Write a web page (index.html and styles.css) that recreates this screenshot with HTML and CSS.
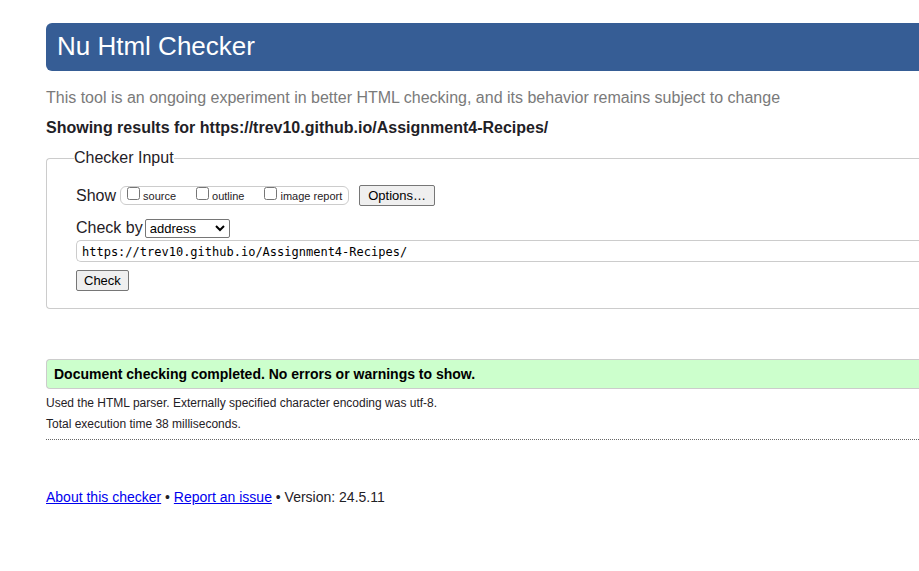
FILE: index.html
```html
<!DOCTYPE html>
<html lang="en">
<head>
<meta charset="utf-8">
<title>Nu Html Checker</title>
<link rel="stylesheet" href="styles.css">
</head>
<body>
<header class="banner"><h1>Nu Html Checker</h1></header>
<main>
  <p class="note">This tool is an ongoing experiment in better HTML checking, and its behavior remains subject to change</p>
  <h2 class="title">Showing results for https://trev10.github.io/Assignment4-Recipes/</h2>
  <form>
    <fieldset class="panel">
      <legend>Checker Input</legend>
      <div class="row show-row">
        <span>Show</span>
        <div class="checks">
          <label><input type="checkbox"><span>source</span></label>
          <label><input type="checkbox"><span>outline</span></label>
          <label><input type="checkbox"><span>image report</span></label>
        </div>
        <button type="button" class="options">Options…</button>
      </div>
      <div class="row by-row">
        <label for="method">Check by</label>
        <div class="select">
          <select id="method"><option>address</option><option>file upload</option><option>text input</option></select>
          <svg viewBox="0 0 10 7" aria-hidden="true"><path d="M1 1l4 4 4-4"/></svg>
        </div>
      </div>
      <input class="address" type="text" aria-label="Address" value="https://trev10.github.io/Assignment4-Recipes/">
      <button type="submit">Check</button>
    </fieldset>
  </form>
  <section class="results">
    <p class="success">Document checking completed. No errors or warnings to show.</p>
    <p class="detail">Used the HTML parser. Externally specified character encoding was utf-8.</p>
    <p class="detail">Total execution time 38 milliseconds.</p>
  </section>
</main>
<footer><a href="#about">About this checker</a> • <a href="#issue">Report an issue</a> • Version: 24.5.11</footer>
</body>
</html>
```
FILE: styles.css
```css
* { box-sizing: border-box; }

body {
  margin: 0;
  padding: 23px 0 0 46px;
  background: #fff;
  color: #1f2126;
  font: 16px/20px "Liberation Sans", Arial, sans-serif;
}

h1, h2, p { margin: 0; }

.banner {
  padding: 8px 11px 10px;
  border-radius: 6px 0 0 6px;
  background: #365d95;
  color: #fff;
}

.banner h1 { font-size: 26px; line-height: 30px; font-weight: 400; }

.note { margin-top: 17px; color: #7a7a7a; }

.title { margin-top: 10px; font-size: 16px; }

.panel {
  min-width: 0;
  margin: 10px 0 0;
  padding: 17px 0 17px 29px;
  border: 1px solid #ccc;
  border-right: 0;
  border-radius: 4px 0 0 4px;
}

.panel legend { margin-left: -2px; padding: 0; }

.row { display: flex; align-items: center; }

.show-row { gap: 4px; }

.checks {
  display: flex;
  gap: 20px;
  height: 19px;
  padding: 0 6px;
  border: 1px solid #ccc;
  border-radius: 6px;
  font-size: 11px;
  line-height: 18px;
}

.checks label { display: flex; gap: 3px; }

.checks input { width: 13px; height: 13px; margin: 0; }

button {
  height: 21px;
  padding: 0 7px;
  border: 1px solid #767676;
  border-radius: 2px;
  background: #efefef;
  color: #000;
  font: 13px/19px "Liberation Sans", Arial, sans-serif;
}

.options { margin-left: 6px; padding: 0 8px; }

.by-row { gap: 2px; margin-top: 12px; }

.select { position: relative; }

.select select {
  display: block;
  width: 85px;
  height: 19px;
  padding: 0 4px;
  border: 1px solid #767676;
  border-radius: 2px;
  background: #fff;
  color: #000;
  appearance: none;
  font: 13px/17px "Liberation Sans", Arial, sans-serif;
}

.select svg {
  position: absolute;
  top: 6px;
  right: 5px;
  width: 10px;
  height: 7px;
  fill: none;
  stroke: #000;
  stroke-width: 2;
  pointer-events: none;
}

.address {
  display: block;
  width: 100%;
  height: 22px;
  margin: 2px 0 8px;
  padding: 1px 5px 0;
  border: 1px solid #ccc;
  border-right: 0;
  border-radius: 5px 0 0 5px;
  color: #000;
  font: 12px/19px "DejaVu Sans Mono", monospace;
}

.results {
  margin-top: 50px;
  padding-bottom: 4px;
  border-bottom: 1px dotted #666;
}

.success {
  margin-bottom: 4px;
  padding: 4px 7px;
  border: 1px solid #ccc;
  border-right: 0;
  border-radius: 4px 0 0 4px;
  background: #cfc;
  color: #000;
  font-size: 14px;
  font-weight: 700;
}

.detail { font-size: 12px; line-height: 21px; }

footer { margin-top: 47px; font-size: 14px; }

footer a { color: #00e; }
```
